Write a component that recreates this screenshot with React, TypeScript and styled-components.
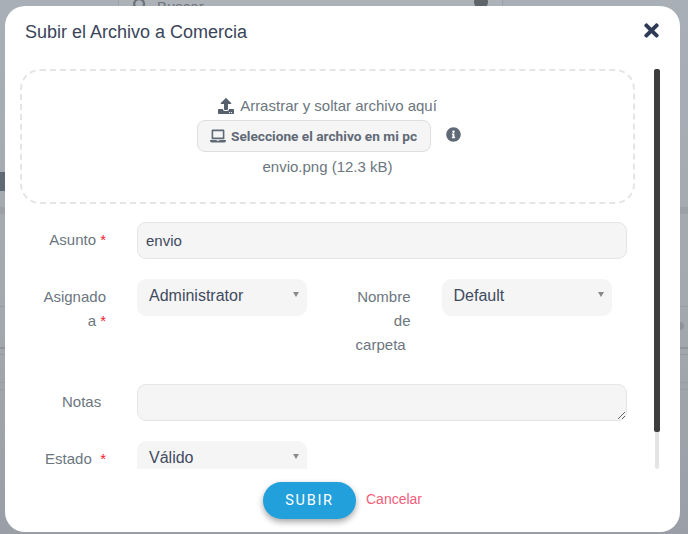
import React from 'react';
import styled, { createGlobalStyle } from 'styled-components';
import { FaInfoCircle, FaLaptop, FaSearch, FaTimes, FaUpload } from 'react-icons/fa';

const GlobalStyle = createGlobalStyle`
  html, body {
    margin: 0;
    padding: 0;
    height: 100%;
  }
  * {
    box-sizing: border-box;
  }
`;

export default function App() {
  return (
    <Page>
      <GlobalStyle />
      <Behind>
        <SearchBar>
          <FaSearch size={15} color="#6f747b" />
          <SearchText>Buscar...</SearchText>
          <SearchDot />
        </SearchBar>
        <SideBlock />
        <Band />
        <RuleFaint $gap={92} />
        <RuleThick />
        <RuleThin />
        <RuleFaint $gap={27} />
        <RuleFaint $gap={6} />
        <PeekDot />
      </Behind>

      <Modal>
        <Header>
          <Title>Subir el Archivo a Comercia</Title>
          <CloseButton aria-label="Cerrar">
            <FaTimes size={21} />
          </CloseButton>
        </Header>

        <Body>
          <ScrollArea>
            <DropZone>
              <DropLine>
                <FaUpload size={16} color="#56616d" />
                Arrastrar y soltar archivo aquí
              </DropLine>
              <PickRow>
                <PickButton>
                  <FaLaptop size={16} />
                  Seleccione el archivo en mi pc
                </PickButton>
                <InfoIcon>
                  <FaInfoCircle size={15} />
                </InfoIcon>
              </PickRow>
              <FileName>envio.png (12.3 kB)</FileName>
            </DropZone>

            <FormRow $height={57}>
              <Label>
                Asunto <Star>*</Star>
              </Label>
              <TextInput defaultValue="envio" />
            </FormRow>

            <FormRow $height={105}>
              <Label>
                Asignado a <Star>*</Star>
              </Label>
              <SelectWrap>
                <Select defaultValue="Administrator">
                  <option>Administrator</option>
                </Select>
              </SelectWrap>
              <SecondLabel>
                Nombre de carpeta<HiddenStar>*</HiddenStar>
              </SecondLabel>
              <SelectWrap>
                <Select defaultValue="Default">
                  <option>Default</option>
                </Select>
              </SelectWrap>
            </FormRow>

            <FormRow $height={57}>
              <Label>
                Notas<HiddenStar>*</HiddenStar>
              </Label>
              <Notes />
            </FormRow>

            <FormRow $height={48}>
              <Label>
                Estado&nbsp; <Star>*</Star>
              </Label>
              <SelectWrap>
                <Select defaultValue="Válido">
                  <option>Válido</option>
                </Select>
              </SelectWrap>
            </FormRow>
          </ScrollArea>
          <ScrollTrack>
            <ScrollThumb />
          </ScrollTrack>
        </Body>

        <Footer>
          <SubmitButton>SUBIR</SubmitButton>
          <CancelLink>Cancelar</CancelLink>
        </Footer>
      </Modal>
    </Page>
  );
}

const Page = styled.div`
  position: relative;
  width: 688px;
  height: 534px;
  overflow: hidden;
  background: linear-gradient(180deg, #a9afb7 0%, #a3a8ae 60%, #9a9ea7 100%);
`;

const Behind = styled.div`
  height: 100%;
  display: flex;
  flex-direction: column;
`;

const SearchBar = styled.div`
  width: 385px;
  height: 6px;
  margin-left: 118px;
  padding: 0 14px;
  display: flex;
  align-items: flex-end;
  gap: 9px;
  overflow: hidden;
  border-left: 1px solid #9ba1a8;
  border-right: 1px solid #9ba1a8;
  background: #adb1b8;

  > svg {
    flex: none;
    margin-bottom: -7px;
  }
`;

const SearchText = styled.span`
  flex: 1;
  margin-bottom: -9px;
  font-family: 'Liberation Sans', Arial, sans-serif;
  font-size: 15px;
  line-height: 17px;
  color: #6f747b;
`;

const SearchDot = styled.span`
  flex: none;
  width: 14px;
  height: 14px;
  margin-bottom: -3px;
  border-radius: 50%;
  background: #5f646b;
`;

const SideBlock = styled.div`
  width: 5px;
  height: 19px;
  margin-top: 166px;
  background: #5f6a75;
`;

const Band = styled.div`
  height: 7px;
  margin-top: 16px;
  background: #9ca1a8;
`;

const RuleThick = styled.div`
  height: 2px;
  margin-top: 40px;
  background: #90959b;
`;

const RuleThin = styled.div`
  height: 1px;
  margin-top: 5px;
  background: #969ba1;
`;

const RuleFaint = styled.div<{ $gap: number }>`
  height: 1px;
  margin-top: ${(p) => p.$gap}px;
  background: #999ea4;
`;

const PeekDot = styled.div`
  position: absolute;
  top: 322px;
  left: 676px;
  width: 8px;
  height: 8px;
  border-radius: 50%;
  background: #8e939a;
`;

const Modal = styled.div`
  position: absolute;
  top: 6px;
  left: 5px;
  width: 675px;
  height: 526px;
  display: flex;
  flex-direction: column;
  border-radius: 20px;
  background: #ffffff;
`;

const Header = styled.div`
  height: 63px;
  padding: 14px 18px 0 20px;
  display: flex;
  align-items: flex-start;
  justify-content: space-between;
  flex: none;
`;

const Title = styled.div`
  font-family: 'Liberation Sans', Arial, sans-serif;
  font-size: 18px;
  line-height: 24px;
  color: #3a4459;
`;

const CloseButton = styled.div`
  width: 21px;
  height: 21px;
  display: flex;
  color: #2f3a56;
`;

const Body = styled.div`
  height: 400px;
  flex: none;
  display: flex;
`;

const ScrollArea = styled.div`
  width: 649px;
  padding-left: 15px;
  overflow: hidden;
`;

const ScrollTrack = styled.div`
  width: 4px;
  margin-left: 1px;
  border-radius: 2px;
  background: #e4e4e4;
`;

const ScrollThumb = styled.div`
  width: 6px;
  height: 363px;
  margin-left: -1px;
  border-radius: 2px;
  background: #3d3d3d;
`;

const DropZone = styled.div`
  width: 615px;
  height: 135px;
  padding-top: 25px;
  display: flex;
  flex-direction: column;
  align-items: center;
  border: 2px dashed #e5e5e5;
  border-radius: 20px;
  font-family: 'Liberation Sans', Arial, sans-serif;
  font-size: 15px;
  color: #6c7680;
`;

const DropLine = styled.div`
  height: 20px;
  display: flex;
  align-items: center;
  gap: 6px;
  line-height: 20px;
`;

const PickRow = styled.div`
  margin: 4px 0 0 2px;
  display: flex;
  align-items: center;
  gap: 15px;
`;

const PickButton = styled.div`
  width: 234px;
  height: 32px;
  display: flex;
  align-items: center;
  justify-content: center;
  gap: 5px;
  border: 1px solid #dedede;
  border-radius: 8px;
  background: #f5f5f5;
  font-family: Roboto, Arial, sans-serif;
  font-size: 13.7px;
  font-weight: 700;
  color: #5f6a76;
`;

const InfoIcon = styled.div`
  display: flex;
  margin-top: -3px;
  color: #5f6a76;
`;

const FileName = styled.div`
  margin-top: 5px;
  line-height: 20px;
`;

const FormRow = styled.div<{ $height: number }>`
  height: ${(p) => p.$height}px;
  display: flex;
  align-items: flex-start;
  font-family: 'Liberation Sans', Arial, sans-serif;

  ${DropZone} + & {
    margin-top: 18px;
  }
`;

const Label = styled.div`
  width: 70px;
  margin-left: 16px;
  margin-right: 31px;
  padding-top: 6px;
  flex: none;
  text-align: right;
  font-size: 15px;
  line-height: 24px;
  color: #6c7680;
`;

const SecondLabel = styled(Label)`
  width: 72px;
  margin-left: 31.5px;
  margin-right: 31px;
  padding-left: 8px;
`;

const Star = styled.span`
  color: #f0202f;
`;

const HiddenStar = styled.span`
  visibility: hidden;
  letter-spacing: -1px;
`;

const TextInput = styled.input`
  width: 490px;
  height: 37px;
  padding: 0 8px;
  border: 1px solid #e5e5e5;
  border-radius: 9px;
  outline: none;
  background: #f5f5f5;
  font-family: 'Liberation Sans', Arial, sans-serif;
  font-size: 15px;
  color: #3f4a60;
`;

const Notes = styled.textarea`
  display: block;
  width: 490px;
  height: 37px;
  padding: 8px;
  border: 1px solid #e5e5e5;
  border-radius: 9px;
  outline: none;
  background: #f5f5f5;
  resize: vertical;
`;

const SelectWrap = styled.div`
  position: relative;
  width: 170px;
  height: 37px;
  flex: none;

  &::after {
    content: '';
    position: absolute;
    top: 13px;
    right: 8px;
    border-left: 3px solid transparent;
    border-right: 3px solid transparent;
    border-top: 5px solid #8a8a8a;
    pointer-events: none;
  }
`;

const Select = styled.select`
  display: block;
  width: 100%;
  height: 100%;
  padding: 0 0 5px 12px;
  appearance: none;
  border: 0;
  border-radius: 9px;
  outline: none;
  background: #f5f5f5;
  font-family: 'Liberation Sans', Arial, sans-serif;
  font-size: 16px;
  color: #3f4a60;
`;

const Footer = styled.div`
  padding: 13px 0 0 258px;
  display: flex;
  align-items: center;
  gap: 10px;
`;

const SubmitButton = styled.div`
  width: 93px;
  height: 37px;
  display: flex;
  align-items: center;
  justify-content: center;
  border-radius: 19px;
  background: #22a0dc;
  box-shadow: 0 3px 6px rgba(0, 0, 0, 0.35);
  font-family: Roboto, Arial, sans-serif;
  font-size: 14.5px;
  font-weight: 400;
  letter-spacing: 1.7px;
  color: #ffffff;
`;

const CancelLink = styled.div`
  margin-bottom: 4px;
  font-family: 'Liberation Sans', Arial, sans-serif;
  font-size: 14px;
  color: #f0607a;
`;
